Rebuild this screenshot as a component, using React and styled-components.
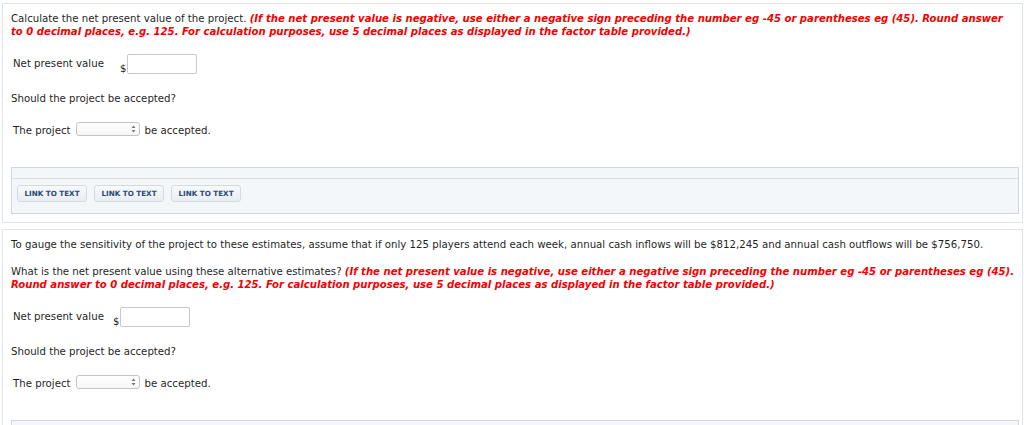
import React from 'react'
import styled, { createGlobalStyle } from 'styled-components'

const GlobalStyle = createGlobalStyle`
  body {
    margin: 0;
    background: #fff;
    font-family: "DejaVu Sans", Verdana, sans-serif;
    font-size: 10.2px;
    color: #1f1f1f;
  }
`

const Page = styled.div`
  padding: 3px 1px 0 2px;
`

const Card = styled.div`
  border: 1px solid #dde4ec;
  padding: 8px 0 8px 8px;
  margin-bottom: 6px;
`

const Para = styled.p`
  margin: 0 7px ${p => p.gap || 0}px 0;
  line-height: 13px;
`

const Note = styled.em`
  color: #f50000;
  font-size: 10.1px;
  font-weight: bold;
  font-style: italic;
`

const AnswerRow = styled.div`
  display: flex;
  align-items: flex-end;
  margin: 16px 0 18px 2px;
`

const RowLabel = styled.span`
  width: ${p => p.width}px;
  align-self: center;
  line-height: 13px;
  position: relative;
  top: -1px;
`

const Dollar = styled.span`
  font-size: 10px;
  line-height: 11px;
  margin-right: 1px;
`

const TextBox = styled.div`
  width: 68px;
  height: 18px;
  border: 1px solid #c8c8c8;
  border-radius: 2px;
  background: #fff;
`

const SelectRow = styled.div`
  display: flex;
  align-items: flex-start;
  gap: 5px;
  margin: 17px 0 29px 2px;
  line-height: 14px;
`

const RowText = styled.span`
  padding-top: 2px;
`

const SelectBox = styled.div`
  width: 59px;
  height: 12px;
  border: 1px solid #c4c4c4;
  border-radius: 3px;
  background: linear-gradient(#ffffff, #f6f6f6);
  display: flex;
  justify-content: flex-end;
  align-items: center;
  padding-right: 3px;
  box-sizing: content-box;
`

const Arrows = styled.svg`
  width: 5px;
  height: 8px;
`

const Panel = styled.div`
  border: 1px solid #cfd8e2;
  background: #f4f7fa;
  margin-right: 3px;
`

const PanelHead = styled.div`
  height: 10px;
  border-bottom: 1px solid #d8e0e9;
`

const ButtonBar = styled.div`
  display: flex;
  gap: 7px;
  padding: 6px 5px 11px 5px;
`

const LinkButton = styled.button`
  font-family: "DejaVu Sans", Verdana, sans-serif;
  font-size: 7.2px;
  font-weight: bold;
  color: #2c4878;
  height: 17px;
  width: 70px;
  padding: 0;
  border: 1px solid #d2dae3;
  border-radius: 3px;
  background: linear-gradient(#f7f9fb, #e9eef3);
  text-transform: uppercase;
  cursor: pointer;
`

const note =
  '(If the net present value is negative, use either a negative sign preceding the number eg -45 or parentheses eg (45). Round answer to 0 decimal places, e.g. 125. For calculation purposes, use 5 decimal places as displayed in the factor table provided.)'

function Answer({ labelWidth }) {
  return (
    <>
      <AnswerRow>
        <RowLabel width={labelWidth}>Net present value</RowLabel>
        <Dollar>$</Dollar>
        <TextBox />
      </AnswerRow>
      <Para>Should the project be accepted?</Para>
      <SelectRow>
        <RowText>The project</RowText>
        <SelectBox>
          <Arrows viewBox="0 0 5 8">
            <path d="M2.5 0.5 L4.5 3 L0.5 3 Z M2.5 7.5 L4.5 5 L0.5 5 Z" fill="#777" />
          </Arrows>
        </SelectBox>
        <RowText>be accepted.</RowText>
      </SelectRow>
    </>
  )
}

function Links() {
  return (
    <Panel>
      <PanelHead />
      <ButtonBar>
        <LinkButton>Link to Text</LinkButton>
        <LinkButton>Link to Text</LinkButton>
        <LinkButton>Link to Text</LinkButton>
      </ButtonBar>
    </Panel>
  )
}

export default function App() {
  return (
    <Page>
      <GlobalStyle />
      <Card>
        <Para>
          Calculate the net present value of the project. <Note>{note}</Note>
        </Para>
        <Answer labelWidth={107} />
        <Links />
      </Card>
      <Card>
        <Para gap={14}>
          To gauge the sensitivity of the project to these estimates, assume that if only 125 players attend each week, annual cash inflows will be $812,245 and annual cash outflows will be $756,750.
        </Para>
        <Para>
          What is the net present value using these alternative estimates? <Note>{note}</Note>
        </Para>
        <Answer labelWidth={100} />
        <Links />
      </Card>
    </Page>
  )
}
